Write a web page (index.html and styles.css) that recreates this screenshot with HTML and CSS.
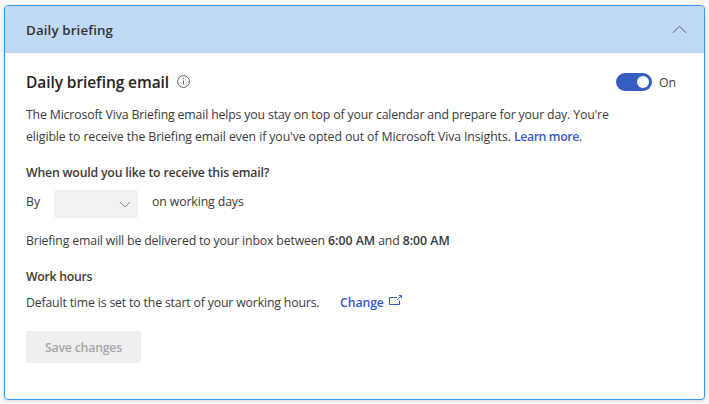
FILE: index.html
```html
<!DOCTYPE html>
<html lang="en">
<head>
<meta charset="utf-8">
<title>Daily briefing</title>
<link rel="stylesheet" href="styles.css">
</head>
<body>
<section class="card">
  <header class="card-header">
    <h1 class="card-title">Daily briefing</h1>
    <svg class="chevron-up" width="15" height="9" viewBox="0 0 15 9"><path d="M1 7.8 7.5 1.2 14 7.8"/></svg>
  </header>
  <div class="card-body">
    <div class="heading-row">
      <h2 class="heading">Daily briefing email</h2>
      <svg class="info" width="13" height="13" viewBox="0 0 13 13"><circle cx="6.5" cy="6.5" r="5.9"/><path d="M6.5 5.5v4M6.5 3.2v1.1"/></svg>
      <div class="switch"><span class="knob"></span></div>
      <span class="switch-label">On</span>
    </div>
    <p class="intro"><span class="line line-one">The Microsoft Viva Briefing email helps you stay on top of your calendar and prepare for your day. You're</span> <span class="line line-two">eligible to receive the Briefing email even if you've opted out of Microsoft Viva Insights. <a class="link learn">Learn more</a>.</span></p>
    <h3 class="question">When would you like to receive this email?</h3>
    <div class="time-row">
      <span class="by">By</span>
      <div class="select"><svg width="12" height="7" viewBox="0 0 12 7"><path d="M.8.8 6 6 11.2.8"/></svg></div>
      <span class="days">on working days</span>
    </div>
    <p class="delivery">Briefing email will be delivered to your inbox between <b>6:00 AM</b> and <b>8:00 AM</b></p>
    <h3 class="work">Work hours</h3>
    <div class="hours-row">
      <span class="default">Default time is set to the start of your working hours.</span>
      <a class="link change">Change</a>
      <svg class="external" width="13" height="11" viewBox="0 0 13 11"><path d="M8 2.5H.5v7h10V5.5M8 5 12 1M9.8.5h2.7v2.7"/></svg>
    </div>
    <button class="save" disabled><span>Save changes</span></button>
  </div>
</section>
</body>
</html>
```

FILE: styles.css
```css
* { box-sizing: border-box; }
body {
  margin: 0;
  padding: 5px 4px 4px;
  height: 404px;
  overflow: hidden;
  background: #f7f7f7;
  color: #3b3a39;
  font: 12.3px/22px "Open Sans", "Noto Sans", sans-serif;
}
h1, h2, h3, p { margin: 0; }
svg { display: block; fill: none; stroke-width: 1; }
.card {
  width: 701px;
  height: 395px;
  background: #fff;
  border: 1px solid #3598f7;
  border-radius: 4px;
  overflow: hidden;
  box-shadow: 0 1px 3px rgba(0, 0, 0, .12);
}
.card-header {
  height: 47px;
  padding: 0 17px 0 21px;
  display: flex;
  align-items: center;
  justify-content: space-between;
  background: #c0d9f7;
}
.card-title { font-size: 13.3px; font-weight: 600; color: #323130; line-height: 20px; letter-spacing: .14px; }
.chevron-up { stroke: #605e5c; }
.card-body { padding: 18px 21px 0; }
.heading-row { display: flex; align-items: center; height: 22px; }
.heading { font-size: 15.5px; font-weight: 600; color: #252423; width: 151px; white-space: nowrap; letter-spacing: -.08px; }
.info { stroke: #605e5c; margin-top: -1px; }
.switch {
  width: 36px;
  height: 18px;
  margin-left: 426px;
  padding: 3px;
  border-radius: 9px;
  background: #385dc0;
  display: flex;
  justify-content: flex-end;
}
.knob { width: 12px; height: 12px; border-radius: 50%; background: #fff; }
.switch-label { margin-left: 7px; padding-top: 1px; }
.intro { margin-top: 11px; }
.line { display: block; white-space: nowrap; width: max-content; }
.line-one { letter-spacing: -.16px; }
.line-two { letter-spacing: -.1px; }
.link { color: #3659c9; font-weight: 600; }
.learn { letter-spacing: -.37px; }
h3 { font-size: 12.3px; font-weight: 600; white-space: nowrap; width: max-content; }
.question { margin-top: 14px; letter-spacing: -.2px; }
.time-row { display: flex; height: 28px; margin-top: 6px; }
.by { width: 28px; margin-top: 1px; }
.select {
  width: 84px;
  height: 28px;
  border-radius: 2px;
  background: #f3f2f1;
  padding: 11px 7px 0 0;
  display: flex;
  justify-content: flex-end;
}
.select svg { stroke: #8a8886; }
.days { margin: 1px 0 0 14px; white-space: nowrap; letter-spacing: -.12px; }
.delivery { margin-top: 12px; white-space: nowrap; width: max-content; letter-spacing: -.155px; }
.delivery b { font-weight: 600; letter-spacing: 0; }
.work { margin-top: 14px; letter-spacing: -.3px; }
.hours-row { display: flex; height: 22px; margin-top: 4px; white-space: nowrap; }
.default { width: 314px; letter-spacing: -.17px; }
.change { width: 49px; letter-spacing: -.1px; }
.external { stroke: #3659c9; margin-top: 3px; }
.save {
  display: block;
  width: 115px;
  height: 32px;
  margin-top: 17px;
  padding: 1px 0 0;
  border: 0;
  border-radius: 2px;
  background: #efefef;
  color: #a6a6a6;
  font: 600 12.3px/22px "Open Sans", "Noto Sans", sans-serif;
  letter-spacing: -.2px;
}
```
